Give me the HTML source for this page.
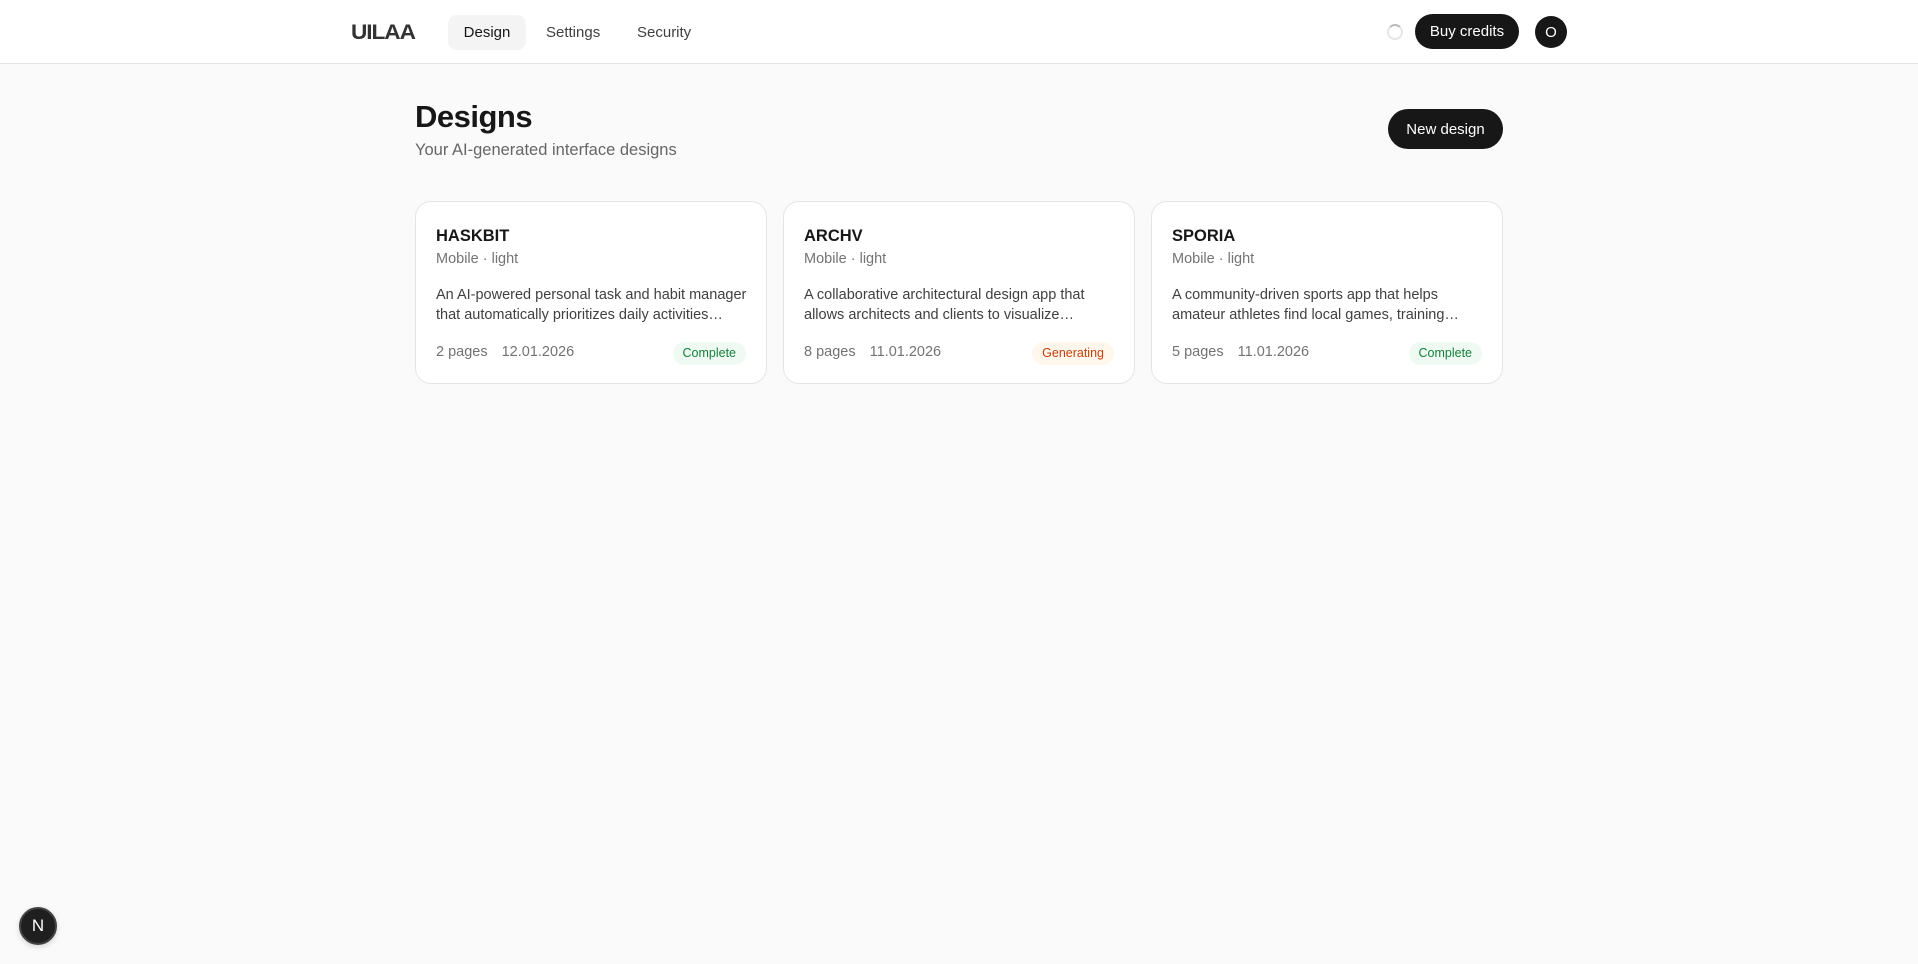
<!DOCTYPE html>
<html><head><meta charset="utf-8"><style>
*{box-sizing:border-box;margin:0;padding:0}
body{width:1918px;height:964px;background:#fafafa;font-family:"Liberation Sans",sans-serif;color:#171717;position:relative;overflow:hidden}
.hdr{position:absolute;left:0;top:0;width:1918px;height:64px;background:#fff;border-bottom:1px solid #e5e5e5}
.logo{position:absolute;left:351px;top:21px;font-weight:900;font-size:21px;letter-spacing:-1px;color:#333;transform:scaleX(1.08);transform-origin:left}
.nav{position:absolute;top:15px;height:35px;line-height:35px;font-size:15px;color:#404040}
.pill{background:#f4f4f5;border-radius:9px;color:#171717;left:448px;width:78px;text-align:center}
.spin{position:absolute;left:1387px;top:24px;width:16px;height:16px;border-radius:50%;border:2px solid #e5e5e5;border-top-color:#bbb}
.buy{position:absolute;left:1415px;top:14px;width:104px;height:35px;border-radius:18px;background:#171717;color:#fff;font-size:15px;line-height:36px;text-align:center}
.av{position:absolute;left:1535px;top:16px;width:32px;height:32px;border-radius:50%;background:#171717;color:#fff;font-size:15px;line-height:33px;text-align:center}
h1{position:absolute;left:415px;top:99px;font-size:31px;font-weight:600;letter-spacing:-0.5px}
.sub{position:absolute;left:415px;top:141px;font-size:16.5px;color:#666}
.new{position:absolute;left:1388px;top:109px;width:115px;height:40px;border-radius:20px;background:#171717;color:#fff;font-size:15px;line-height:41px;text-align:center}
.card{position:absolute;top:201px;width:352px;height:183px;background:#fff;border:1px solid #e5e5e5;border-radius:16px}
.t{position:absolute;left:20px;top:25px;font-size:16.5px;font-weight:600}
.m{position:absolute;left:20px;top:49px;font-size:14.5px;color:#737373}
.d{position:absolute;left:20px;top:83px;white-space:nowrap;font-size:14.5px;line-height:20px;color:#404040}
.f{position:absolute;left:20px;top:142px;font-size:14.5px;color:#737373}
.f span{margin-right:14px}
.b{position:absolute;right:20px;top:140px;height:23px;line-height:23px;padding:0 10px;border-radius:12px;font-size:12.5px}
.ok{background:#effaf2;color:#15803d}
.gen{background:#fff6ec;color:#c2410c}
.n{position:absolute;left:19px;top:907px;width:38px;height:38px;border-radius:50%;background:#1f1f1f;border:2px solid #444;color:#fff;text-align:center;line-height:34px;font-size:17px;box-shadow:0 2px 6px rgba(0,0,0,.15)}
</style></head><body>
<div class="hdr">
<div class="logo">UILAA</div>
<div class="nav pill">Design</div>
<div class="nav" style="left:546px">Settings</div>
<div class="nav" style="left:637px">Security</div>
<div class="spin"></div>
<div class="buy">Buy credits</div>
<div class="av">O</div>
</div>
<h1>Designs</h1>
<div class="sub">Your AI-generated interface designs</div>
<div class="new">New design</div>
<div class="card" style="left:415px"><div class="t">HASKBIT</div><div class="m">Mobile · light</div><div class="d">An AI-powered personal task and habit manager<br>that automatically prioritizes daily activities…</div><div class="f"><span>2 pages</span>12.01.2026</div><div class="b ok">Complete</div></div>
<div class="card" style="left:783px"><div class="t">ARCHV</div><div class="m">Mobile · light</div><div class="d">A collaborative architectural design app that<br>allows architects and clients to visualize…</div><div class="f"><span>8 pages</span>11.01.2026</div><div class="b gen">Generating</div></div>
<div class="card" style="left:1151px"><div class="t">SPORIA</div><div class="m">Mobile · light</div><div class="d">A community-driven sports app that helps<br>amateur athletes find local games, training…</div><div class="f"><span>5 pages</span>11.01.2026</div><div class="b ok">Complete</div></div>
<div class="n">N</div>
</body></html>
